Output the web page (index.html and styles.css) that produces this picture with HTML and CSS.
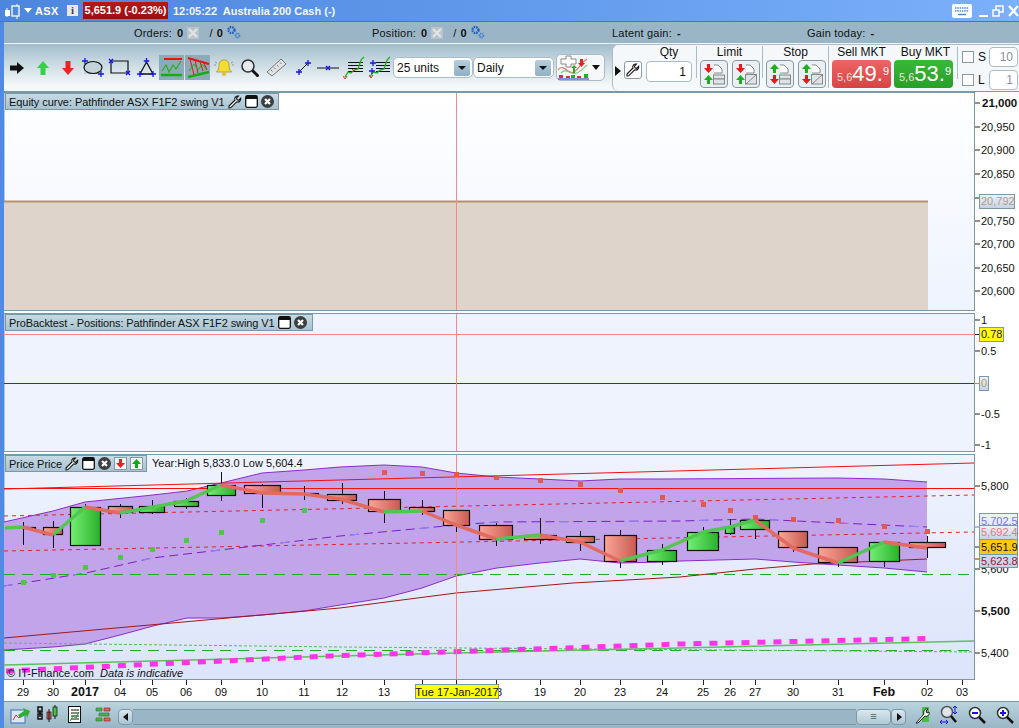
FILE: index.html
```html
<!DOCTYPE html>
<html lang="en">
<head>
<meta charset="utf-8">
<title>ASX - Australia 200 Cash</title>
<link rel="stylesheet" href="styles.css">
</head>
<body>
<svg class="defs" width="0" height="0" aria-hidden="true">
  <defs>
    <linearGradient id="cr" x1="0" x2="1" y1="0" y2="0"><stop offset="0" stop-color="#fba597"/><stop offset="1" stop-color="#c85a50"/></linearGradient>
    <linearGradient id="cg" x1="0" x2="1" y1="0" y2="0"><stop offset="0" stop-color="#74ee74"/><stop offset="1" stop-color="#2bb02b"/></linearGradient>
    <linearGradient id="bg1" x1="0" x2="0" y1="0" y2="1"><stop offset="0" stop-color="#ffffff"/><stop offset="1" stop-color="#eef3fe"/></linearGradient>
    <linearGradient id="bg3" x1="0" x2="0" y1="0" y2="1"><stop offset="0" stop-color="#eff3fe"/><stop offset="1" stop-color="#dce4fb"/></linearGradient>
    <linearGradient id="box" x1="0" x2="0" y1="0" y2="1"><stop offset="0" stop-color="#eef2f7"/><stop offset="1" stop-color="#c3d2e6"/></linearGradient>
    <symbol id="gears" viewBox="0 0 15 14"><circle cx="5.5" cy="5" r="3" fill="none" stroke="#1f5fc0" stroke-width="2.4" stroke-dasharray="1.6 .8"/><circle cx="11.5" cy="10.5" r="2" fill="none" stroke="#3f7fd0" stroke-width="1.8" stroke-dasharray="1.2 .6"/></symbol>
    <symbol id="xbox" viewBox="0 0 12 12"><rect width="12" height="12" fill="#b9c3c8"/><path d="M2 2l8 8M10 2l-8 8" stroke="#dfe4e6" stroke-width="2.4"/></symbol>
    <symbol id="wrench" viewBox="0 0 14 14"><path d="M1 13l0-2 6-6c-.8-2 .6-4.300 3.500-4l-2 2.200.5 1.600 1.700.5 2-2c.4 3-2 4.500-4 3.500l-6 6z" fill="#fff" stroke="#111" stroke-width="1.100"/></symbol>
    <symbol id="win" viewBox="0 0 13 13"><rect x=".7" y=".7" width="11.600" height="11.600" rx="1.500" fill="#fff" stroke="#111" stroke-width="1.300"/><rect x="1" y="1" width="11" height="3" fill="#111"/></symbol>
    <symbol id="close" viewBox="0 0 13 13"><circle cx="6.500" cy="6.500" r="6.500" fill="#3c3f42"/><path d="M4 4l5 5M9 4l-5 5" stroke="#fff" stroke-width="2.200"/></symbol>
    <symbol id="plus" viewBox="0 0 6 6"><path d="M3 0v6M0 3h6" stroke="#1414ee" stroke-width="1.300"/></symbol>
  </defs>
</svg>
<div class="window">
  <header class="titlebar">
    <svg class="ico-candle" width="17" height="18" viewBox="0 0 17 18"><path d="M3 6v9M13 2v15" stroke="#fff"/><rect x="1" y="8" width="5" height="6" fill="#fff"/><rect x="8" y="4" width="7" height="10" fill="#4f88dd" stroke="#fff" stroke-width="1.300"/></svg>
    <svg class="ico-drop" width="8" height="5" viewBox="0 0 8 5"><path d="M0 0h8L4 5z" fill="#fff"/></svg>
    <span class="t-sym">ASX</span>
    <span class="t-info">i</span>
    <span class="t-price">5,651.9 (-0.23%)</span>
    <span class="t-name">12:05:22&nbsp; Australia 200 Cash (-)</span>
    <span class="t-spacer"></span>
    <svg class="ico-kbd" width="20" height="14" viewBox="0 0 20 14"><rect width="20" height="14" rx="2" fill="#fff"/><path d="M3 4h14M3 7h14" stroke="#4f88dd" stroke-width="1.500" stroke-dasharray="1.500 .8"/><path d="M6 10.500h8" stroke="#4f88dd" stroke-width="1.500"/></svg>
    <svg class="ico-wc" width="41" height="14" viewBox="0 0 41 14"><path d="M1 12h9" stroke="#fff" stroke-width="2"/><path d="M15 6h6v6h-6zM18 6V2h7v6h-4" fill="none" stroke="#fff" stroke-width="1.500"/><path d="M31 2l9 10M40 2l-9 10" stroke="#fff" stroke-width="2.200"/></svg>
  </header>

  <div class="infobar">
    <div class="info-group g1"><span>Orders:</span><b>0</b><svg class="ix" width="12" height="12"><use href="#xbox"/></svg><span class="sl">/</span><b>0</b><svg class="gr" width="15" height="14"><use href="#gears"/></svg></div>
    <div class="info-group g2"><span>Position:</span><b>0</b><svg class="ix" width="12" height="12"><use href="#xbox"/></svg><span class="sl">/</span><b>0</b><svg class="gr" width="15" height="14"><use href="#gears"/></svg></div>
    <div class="info-group g3"><span>Latent gain:</span><b>-</b></div>
    <div class="info-group g4"><span>Gain today:</span><b>-</b></div>
  </div>

  <div class="toolbar">
    <div class="tools">
      <svg class="tool t1" width="14" height="12" viewBox="0 0 14 12"><path d="M0 3.500h7V0l7 6-7 6V8.500H0z" fill="#111"/></svg>
      <svg class="tool t2" width="12" height="14" viewBox="0 0 12 14"><path d="M6 0l6 7H8.500v7h-5V7H0z" fill="#35d04a"/></svg>
      <svg class="tool t3" width="12" height="14" viewBox="0 0 12 14"><path d="M3.500 0h5v7H12l-6 7-6-7h3.500z" fill="#f02222"/></svg>
      <svg class="tool t4" width="23" height="20" viewBox="0 0 23 20"><rect x="2" y="3" width="17" height="13" fill="#c4d2da"/><ellipse cx="11" cy="9.500" rx="9" ry="6" fill="none" stroke="#111" stroke-width="1.200"/><use href="#plus" x="0" y="0" width="6" height="6"/><use href="#plus" x="16" y="13" width="6" height="6"/></svg>
      <svg class="tool t5" width="23" height="20" viewBox="0 0 23 20"><path d="M3 3h17v12H3z" fill="none" stroke="#111" stroke-width="1.200"/><path d="M1 1l4 4M5 1L1 5M18 13l4 4M22 13l-4 4" stroke="#1414ee" stroke-width="1.300"/></svg>
      <svg class="tool t6" width="19" height="20" viewBox="0 0 19 20"><path d="M9.500 4L3 16h13z" fill="none" stroke="#111" stroke-width="1.300"/><use href="#plus" x="6.500" y="0" width="6" height="6"/><use href="#plus" x="0" y="13" width="6" height="6"/><use href="#plus" x="13" y="13" width="6" height="6"/></svg>
      <span class="tool-on on1"><svg width="23" height="21" viewBox="0 0 23 21"><path d="M4 2h18" stroke="#f01010" stroke-width="2"/><path d="M1 18h21" stroke="#10b010" stroke-width="2.500"/><path d="M2 14l4-6 3 7 4-7 3 4 5-8" fill="none" stroke="#1bb41b" stroke-width="1.200"/></svg></span>
      <span class="tool-on on2"><svg width="24" height="23" viewBox="0 0 24 23"><path d="M2 2l21 6" stroke="#f01010" stroke-width="2"/><path d="M2 21l21-5" stroke="#10b010" stroke-width="2.500"/><path d="M4 3l4 16M9 4l3 13M14 6l3 9M18 7l3 7" stroke="#f01010" stroke-width="1"/><path d="M3 15l5-7 4 6 4-6 4 5" fill="none" stroke="#1bb41b" stroke-width="1"/></svg></span>
      <svg class="tool t7" width="20" height="18" viewBox="0 0 20 18"><path d="M10 1c4 0 5 3 5 6 0 3 1 4 2.500 6h-15C4 11 5 10 5 7c0-3 1-6 5-6z" fill="#f5dc32" stroke="#a08a10" stroke-width=".7"/><circle cx="10" cy="15" r="2" fill="#e0c020"/><path d="M1 3l2 1M0 6l2 0M19 3l-2 1M20 6l-2 0" stroke="#999"/></svg>
      <svg class="tool t8" width="18" height="18" viewBox="0 0 18 18"><circle cx="7" cy="7" r="6" fill="#e6eaec" stroke="#333" stroke-width="1.600"/><path d="M11.500 11.500l6 6" stroke="#111" stroke-width="3"/></svg>
      <svg class="tool t9" width="21" height="19" viewBox="0 0 21 19"><path d="M1 14L15 1l5 5L6 18z" fill="#dfe3e4" stroke="#777"/><path d="M5 12l1.500 1.500M8 9.500l1.500 1.500M11 7l1.500 1.500M14 4.500l1.500 1.500" stroke="#777"/></svg>
      <svg class="tool t10" width="15" height="15" viewBox="0 0 15 15"><path d="M3 12L12 3" stroke="#111"/><use href="#plus" x="0" y="9" width="6" height="6"/><use href="#plus" x="9" y="0" width="6" height="6"/></svg>
      <svg class="tool t11" width="22" height="6" viewBox="0 0 22 6"><path d="M0 3h22" stroke="#111"/><path d="M9 1l4 4M13 1L9 5" stroke="#1414ee" stroke-width="1.300"/></svg>
      <svg class="tool t12" width="22" height="23" viewBox="0 0 22 23"><path d="M5 6.500h15M5 9.500h15M5 12.500h15M5 15.500h15" stroke="#111" stroke-width="1.100"/><path d="M2 21l3-5 3 1 3-3 4-1 3-9 3-3" fill="none" stroke="#1cb01c" stroke-width="1.300"/><path d="M0 20l2 3 2-3" fill="none" stroke="#e83030"/><path d="M9 13l2 2 2-2" fill="none" stroke="#e83030"/></svg>
      <svg class="tool t13" width="22" height="23" viewBox="0 0 22 23"><path d="M7 6.500h14M7 9.500h14M7 12.500h14M7 15.500h14" stroke="#111" stroke-width="1.100"/><path d="M1 21l3-5 4 1 3-3 4-1 3-9 3-3" fill="none" stroke="#1cb01c" stroke-width="1.300"/><path d="M0 19l2 3 2-3" fill="none" stroke="#e83030"/><use href="#plus" x="1" y="4" width="6" height="6"/><use href="#plus" x="0" y="12" width="6" height="6"/></svg>
      <div class="select s-units"><span>25 units</span><i class="sel-btn"></i></div>
      <div class="select s-daily"><span>Daily</span><i class="sel-btn"></i></div>
      <div class="indbtn">
        <svg width="33" height="25" viewBox="0 0 33 25"><path d="M4 4h5V1h5v3h5v5h-5v3H9V9H4z" fill="#fff" stroke="#888"/><path d="M1 15c6-8 10 6 16 2s8-10 13-13" fill="none" stroke="#e07070" stroke-width="1.200"/><path d="M4 18c6-6 10 3 16 0s7-6 10-8" fill="none" stroke="#7ccc7c" stroke-width="1.200"/><path d="M14 13l3-3 3 3h-2v5h-2v-5z" fill="#20b020"/><path d="M23 4h3v4h2l-3.500 4L21 8h2z" fill="#e82020"/><path d="M2 20h4v3H2zM9 21h4v2H9zM20 21h4v2h-4z" fill="#e03030"/><path d="M14 20h4v3h-4zM27 19h4v4h-4z" fill="#20b020"/><path d="M1 24h31" stroke="#2222cc"/></svg>
        <span class="ind-arrow"></span>
      </div>
    </div>
    <div class="order">
      <span class="notch"></span>
      <span class="btn-wrench"><svg width="14" height="14"><use href="#wrench"/></svg></span>
      <div class="ocol qty"><label>Qty</label><div class="qty-input">1</div></div>
      <div class="ocol lim"><label>Limit</label>
        <div class="obtns">
          <span class="obtn"><svg width="22" height="22" viewBox="0 0 22 22"><path d="M6 1v4h3l-4.500 5L0 5h3V1z" transform="translate(1 0)" fill="#e81818"/><path d="M4.500 12L9 17H6v4H3v-4H0z" transform="translate(1 0)" fill="#1cb01c"/><path d="M11 2h4l4 4v4h-8" fill="#fff" stroke="#888"/><rect x="10.500" y="12" width="11" height="4" fill="#dde3e6" stroke="#888"/><rect x="10.500" y="16" width="11" height="5" fill="#dde3e6" stroke="#888"/></svg></span>
          <span class="obtn"><svg width="22" height="22" viewBox="0 0 22 22"><path d="M6 1v4h3l-4.500 5L0 5h3V1z" transform="translate(1 0)" fill="#e81818"/><path d="M4.500 12L9 17H6v4H3v-4H0z" transform="translate(1 0)" fill="#1cb01c"/><path d="M11 2h4l4 4v4h-8" fill="#fff" stroke="#888"/><rect x="10.500" y="11.500" width="11" height="9.500" fill="#dde3e6" stroke="#888"/><path d="M11 21l10-9" stroke="#888"/></svg></span>
        </div></div>
      <div class="ocol lim"><label>Stop</label>
        <div class="obtns">
          <span class="obtn"><svg width="22" height="22" viewBox="0 0 22 22"><path d="M4.500 1L9 6H6v4H3V6H0z" transform="translate(1 0)" fill="#1cb01c"/><path d="M6 12v4h3l-4.500 5L0 16h3v-4z" transform="translate(1 0)" fill="#e81818"/><path d="M11 2h4l4 4v4h-8" fill="#fff" stroke="#888"/><rect x="10.500" y="12" width="11" height="4" fill="#dde3e6" stroke="#888"/><rect x="10.500" y="16" width="11" height="5" fill="#dde3e6" stroke="#888"/></svg></span>
          <span class="obtn"><svg width="22" height="22" viewBox="0 0 22 22"><path d="M4.500 1L9 6H6v4H3V6H0z" transform="translate(1 0)" fill="#1cb01c"/><path d="M6 12v4h3l-4.500 5L0 16h3v-4z" transform="translate(1 0)" fill="#e81818"/><path d="M11 2h4l4 4v4h-8" fill="#fff" stroke="#888"/><rect x="10.500" y="11.500" width="11" height="9.500" fill="#dde3e6" stroke="#888"/><path d="M11 21l10-9" stroke="#888"/></svg></span>
        </div></div>
      <div class="ocol mkt"><label>Sell MKT</label><div class="price sell"><small>5,6</small><strong>49.</strong><sup>9</sup></div></div>
      <div class="ocol mkt nosep"><label>Buy MKT</label><div class="price buy"><small>5,6</small><strong>53.</strong><sup>9</sup></div></div>
      <div class="sl-col">
        <div class="sl-row"><span class="chk"></span><span class="sl-l">S</span><span class="sl-in">10</span></div>
        <div class="sl-row"><span class="chk"></span><span class="sl-l">L</span><span class="sl-in">1</span></div>
      </div>
    </div>
  </div>

  <section class="panel p1">
    <svg class="chart" width="1015" height="220" viewBox="4 92 1015 220">
      <rect x="4" y="92.500" width="970.500" height="218" fill="url(#bg1)" stroke="#7b98a6"/>
      <rect x="4" y="201" width="924" height="109" fill="#dfd4cb"/>
      <path d="M4 201.500h924" fill="none" stroke="#b3926f" stroke-width="2"/>
      <path d="M456.500 93v217" fill="none" stroke="#f28a8a"/>
      <g class="ticks"><path d="M975 103h5M975 127h5M975 150h5M975 174h5M975 198h5M975 221h5M975 244h5M975 268h5M975 291h5"/></g>
      <g class="ax"><text class="b" x="982" y="107">21,000</text><text x="981" y="131">20,950</text><text x="981" y="154">20,900</text><text x="981" y="178">20,850</text><text x="981" y="225">20,750</text><text x="981" y="248">20,700</text><text x="981" y="272">20,650</text><text x="981" y="295">20,600</text></g>
      <rect x="979.500" y="194.500" width="35" height="14" fill="url(#box)" stroke="#7b98a6"/>
      <text class="axs" x="981" y="205" fill="#b59a84">20,792</text>
    </svg>
    <div class="plabel pl1"><span>Equity curve: Pathfinder ASX F1F2 swing V1</span><svg width="14" height="14"><use href="#wrench"/></svg><svg width="13" height="13"><use href="#win"/></svg><svg width="13" height="13"><use href="#close"/></svg></div>
  </section>

  <section class="panel p2">
    <svg class="chart" width="1015" height="141" viewBox="4 312 1015 141">
      <rect x="4" y="313.500" width="970.500" height="138" fill="#eff3fe" stroke="#7b98a6"/>
      <path d="M4 334.500h970" fill="none" stroke="#f28a8a"/>
      <path d="M4 383.500h970" fill="none" stroke="#2a2ad4"/>
      <path d="M456.500 314v137" fill="none" stroke="#f28a8a"/>
      <g class="ticks"><path d="M975 320h5M975 351h5M975 414h5M975 445h5"/><path d="M975 334.500h5"/></g>
      <path d="M975 383.500h5" fill="none" stroke="#b58a4a"/>
      <g class="ax"><text x="981" y="324">1</text><text x="981" y="355">0.5</text><text x="981" y="418">-0.5</text><text x="981" y="449">-1</text></g>
      <rect x="979.500" y="327.500" width="24" height="14" fill="#ffff00" stroke="#7b98a6"/>
      <text class="axs" x="981" y="338" fill="#222">0.78</text>
      <rect x="979.500" y="376.500" width="9" height="14" fill="url(#box)" stroke="#7b98a6"/>
      <text class="axs" x="981" y="387" fill="#b59a60">0</text>
    </svg>
    <div class="plabel pl2"><span>ProBacktest - Positions: Pathfinder ASX F1F2 swing V1</span><svg width="13" height="13"><use href="#win"/></svg><svg width="13" height="13"><use href="#close"/></svg></div>
  </section>

  <section class="panel p3">
    <svg class="chart" width="1015" height="248" viewBox="4 453 1015 248">
      <rect x="4" y="454.500" width="970.500" height="225" fill="url(#bg3)" stroke="#7b98a6"/>
      <path d="M4 522 53 511 85 502 153 495 187 491 221 483 262 473 304 470 340 467 384 465 422 467 456 473 497 477 540 479 580 481 620 479 662 479 837 478 884 479 927 482V572L884 568 838 565 793 562 755 559 680 561 662 562 620 563 580 559 540 563 497 568 456 576 422 588 384 598 340 605 304 611 262 615 221 618 187 618 153 626 120 635 85 644 53 647 4 650Z" fill="#c2a4ea"/>
      <path d="M4 522 53 511 85 502 153 495 187 491 221 483 262 473 304 470 340 467 384 465 422 467 456 473 497 477 540 479 580 481 620 479 662 479 837 478 884 479 927 482" fill="none" stroke="#8a2cc8"/>
      <path d="M4 650 53 647 85 644 120 635 153 626 187 618 221 618 262 615 304 611 340 605 384 598 422 588 456 576 497 568 540 563 580 559 620 563 662 562 680 561 755 559 793 562 838 565 884 568 927 572" fill="none" stroke="#8a2cc8"/>
      <path d="M4 488.500h970" fill="none" stroke="#f21010"/>
      <path d="M4 489 974 463" stroke="#f21010" fill="none"/>
      <path d="M4 516 974 495" stroke="#f02020" stroke-dasharray="4 4" fill="none"/>
      <path d="M4 551 974 532" stroke="#f02020" stroke-dasharray="4 4" fill="none"/>
      <path d="M4 586 86 573 152 558 340 536 456 525 497 522 680 521 755 519 838 523 927 527" fill="none" stroke="#7a1fc0" stroke-dasharray="9 5"/>
      <path d="M4 586 86 573 152 558 340 536 456 525 497 522 680 521 755 519 838 523 927 527" fill="none" stroke="#8c8cff" stroke-dasharray="9 61"/>
      <path d="M4 574.500h970" fill="none" stroke="#22aa22" stroke-dasharray="11 7"/>
      <path d="M4 650.500h970" fill="none" stroke="#22aa22" stroke-dasharray="11 7"/>
      <path d="M4 643 340 647 974 652" fill="none" stroke="#5db95d" stroke-dasharray="3 2"/>
      <path d="M4 638 340 608 456 593 573 583 680 577 755 569 813 564 927 559" fill="none" stroke="#a01818"/>
      <path d="M4 665 340 656 456 653 680 648 974 641" fill="none" stroke="#5cc05c" stroke-width="1.500"/>
      <path d="M6 671 330 656 680 644 930 638.500" fill="none" stroke="#ff33e8" stroke-width="5" stroke-dasharray="8 8"/>
      <path d="M456.500 455v224" fill="none" stroke="#f28a8a"/>
      <path class="wick" d="M23.500 522v23M53.500 521v27M85.500 504v4M120.500 504v14M152.500 500v14M186.500 498v11M221.500 472v29M262.500 484v24M304.500 486v14M342.500 483v21M384.500 491v32M422.500 500v15M456.500 510v22M496.500 523v23M540.500 518v26M580.500 531v20M620.500 530v38M662.500 544v21M703.500 527v6M730.500 519v16M755.500 515v24M793.500 548v4M838.500 563v4M884.500 561v6M927.500 536v22"/>
      <g class="cand r">
        <rect x="23.500" y="527.500" width="12" height="1"/><rect x="43.500" y="527.500" width="19" height="7"/><rect x="108.500" y="506.500" width="24" height="6"/><rect x="244.500" y="485.500" width="36" height="8"/><rect x="304.500" y="493.500" width="14" height="1"/><rect x="327.500" y="494.500" width="29" height="6"/><rect x="368.500" y="499.500" width="32" height="12"/><rect x="409.500" y="507.500" width="25" height="4"/><rect x="443.500" y="510.500" width="26" height="15"/><rect x="479.500" y="525.500" width="33" height="14"/><rect x="524.500" y="535.500" width="32" height="4"/><rect x="566.500" y="536.500" width="28" height="6"/><rect x="604.500" y="535.500" width="32" height="26"/><rect x="778.500" y="531.500" width="29" height="16"/><rect x="818.500" y="547.500" width="39" height="15"/><rect x="909.500" y="542.500" width="36" height="5"/>
      </g>
      <g class="cand g">
        <rect x="70.500" y="507.500" width="30" height="38"/><rect x="139.500" y="506.500" width="25" height="6"/><rect x="174.500" y="501.500" width="24" height="5"/><rect x="207.500" y="485.500" width="28" height="10"/><rect x="647.500" y="550.500" width="29" height="11"/><rect x="687.500" y="532.500" width="31" height="18"/><rect x="725.500" y="527.500" width="9" height="6"/><rect x="740.500" y="520.500" width="29" height="9"/><rect x="869.500" y="542.500" width="30" height="19"/>
      </g>
      <g class="trend">
        <path class="tg" d="M5 528 23 527M53 535 85 507M120 513 186 501 221 485M384 512 422 511M496 539 540 535M620 561 662 550 703 532 730 527 755 520M838 563 884 542"/>
        <path class="tr" d="M23 527 53 535M85 507 120 513M221 485 262 493 304 494 340 499 384 512M422 511 456 525 496 539M540 535 580 542 620 561M755 520 793 548 838 563M884 542 927 548"/>
      </g>
      <g class="dots-g"><rect x="21" y="580" width="5" height="5"/><rect x="51" y="573" width="5" height="5"/><rect x="83" y="565" width="5" height="5"/><rect x="118" y="555" width="5" height="5"/><rect x="150" y="547" width="5" height="5"/><rect x="184" y="538" width="5" height="5"/><rect x="219" y="530" width="5" height="5"/><rect x="260" y="518" width="5" height="5"/><rect x="302" y="508" width="5" height="5"/></g>
      <g class="dots-r"><rect x="382" y="470" width="5" height="5"/><rect x="420" y="471" width="5" height="5"/><rect x="454" y="472" width="5" height="5"/><rect x="494" y="475" width="5" height="5"/><rect x="538" y="478" width="5" height="5"/><rect x="578" y="482" width="5" height="5"/><rect x="618" y="488" width="5" height="5"/><rect x="660" y="495" width="5" height="5"/><rect x="701" y="502" width="5" height="5"/><rect x="728" y="508" width="5" height="5"/><rect x="753" y="515" width="5" height="5"/><rect x="791" y="517" width="5" height="5"/><rect x="836" y="518" width="5" height="5"/><rect x="882" y="524" width="5" height="5"/><rect x="925" y="529" width="5" height="5"/></g>
      <g class="ticks"><path d="M975 486h5M975 569h5M975 611h5M975 653h5M975 547h5"/></g>
      <path d="M975 527h5" fill="none" stroke="#6a6af0"/><path d="M975 559h5" fill="none" stroke="#a01020"/>
      <g class="ax"><text x="981" y="490">5,800</text><text x="981" y="573">5,600</text><text class="b" x="981" y="615">5,500</text><text x="981" y="657">5,400</text></g>
      <rect x="979.500" y="513.500" width="38" height="54" fill="url(#box)" stroke="#7b98a6"/>
      <text class="axs" x="981" y="525" fill="#7676f6">5,702.5</text>
      <rect x="979.500" y="525.500" width="38" height="14" fill="url(#box)" stroke="#7b98a6"/>
      <text class="axs" x="981" y="536" fill="#e87878">5,692.4</text>
      <rect x="979.500" y="539.500" width="38" height="15" fill="#ffc80a" stroke="#7b98a6"/>
      <text class="axs" x="981" y="551" fill="#111">5,651.9</text>
      <text class="axs" x="981" y="565" fill="#a01428">5,623.8</text>
      <g class="dt"><path class="ticks-d" d="M23.500 680v5M53.500 680v5M85.500 680v5M120.500 680v5M152.500 680v5M186.500 680v5M221.500 680v5M262.500 680v5M304.500 680v5M342.500 680v5M384.500 680v5M422.500 680v5M456.500 680v5M496.500 680v5M540.500 680v5M580.500 680v5M620.500 680v5M662.500 680v5M703.500 680v5M730.500 680v5M755.500 680v5M793.500 680v5M838.500 680v5M884.500 680v5M927.500 680v5M962.500 680v5"/>
        <text x="23" y="696">29</text><text x="53" y="696">30</text><text class="b" x="85" y="696">2017</text><text x="120" y="696">04</text><text x="152" y="696">05</text><text x="186" y="696">06</text><text x="221" y="696">09</text><text x="262" y="696">10</text><text x="304" y="696">11</text><text x="342" y="696">12</text><text x="384" y="696">13</text><text x="496" y="696">18</text><text x="540" y="696">19</text><text x="580" y="696">20</text><text x="620" y="696">23</text><text x="662" y="696">24</text><text x="703" y="696">25</text><text x="730" y="696">26</text><text x="755" y="696">27</text><text x="793" y="696">30</text><text x="838" y="696">31</text><text class="b" x="884" y="696">Feb</text><text x="927" y="696">02</text><text x="962" y="696">03</text></g>
      <rect x="415.500" y="684.500" width="83" height="14" fill="#ffff00" stroke="#7b98a6"/>
      <text class="dtbox" x="457" y="696">Tue 17-Jan-2017</text>
    </svg>
    <div class="plabel pl3"><span>Price Price</span><svg width="14" height="14"><use href="#wrench"/></svg><svg width="13" height="13"><use href="#win"/></svg><svg width="13" height="13"><use href="#close"/></svg><span class="mini"><svg width="9" height="9" viewBox="0 0 9 9"><path d="M3 0h3v4h3L4.500 9 0 4h3z" fill="#e82020"/></svg></span><span class="mini"><svg width="9" height="9" viewBox="0 0 9 9"><path d="M4.500 0L9 5H6v4H3V5H0z" fill="#10a810"/></svg></span></div>
    <div class="yearinfo">Year:High 5,833.0 Low 5,604.4</div>
    <div class="copy">© IT-Finance.com&nbsp; <em>Data is indicative</em></div>
  </section>

  <footer class="bottombar">
    <div class="b-left">
      <svg width="20" height="20" viewBox="0 0 20 20"><rect x="1" y="5" width="14" height="13" fill="#d8e6f6" stroke="#3a70c0"/><path d="M3 15l3-5 3 3 3-4" fill="none" stroke="#e03030"/><path d="M8 10l6-4-1-3 7 3-3 7-1-3-6 3z" fill="#30b030"/></svg>
      <svg class="gap-a" width="24" height="20" viewBox="0 0 24 20"><path d="M3 2h4v5H3zM3 9h4v5H3z" fill="none" stroke="#111" stroke-width="1.500"/><path d="M5 5v7" stroke="#111" stroke-width="1.500"/><rect x="12" y="7" width="4" height="7" fill="#e86060" stroke="#111" stroke-width=".7"/><path d="M14 4v13M20 0v14" stroke="#111"/><rect x="18" y="2" width="4" height="9" fill="#40c040" stroke="#111" stroke-width=".7"/></svg>
      <svg class="gap-b" width="14" height="18" viewBox="0 0 14 18"><rect x=".5" y=".5" width="12" height="16" fill="#fff" stroke="#111"/><path d="M3 4h8M3 7h8M3 10h8M3 13h8" stroke="#111"/><path d="M2 15l3-5 3 2 3-6" fill="none" stroke="#20a020"/></svg>
      <svg class="gap-c" width="16" height="18" viewBox="0 0 16 18"><path d="M1 2h6v3H1zM4 7h10v3H4zM1 12h6v3H1z" fill="#50b050" stroke="#2a702a" stroke-width=".6"/><path d="M9 2h6v3H9zM9 12h6v3H9z" fill="#e06060" stroke="#902020" stroke-width=".6"/></svg>
    </div>
    <div class="scroll">
      <span class="sb-btn"><i class="tri-l"></i></span>
      <span class="sb-track"></span>
      <span class="sb-thumb">≡</span>
      <span class="sb-btn"><i class="tri-r"></i></span>
    </div>
    <div class="b-right">
      <svg width="16" height="18" viewBox="0 0 16 18"><rect x="8" y="1" width="7" height="15" fill="#45c045"/><path d="M2 17l8-9c-1-3 1-6 4-5l-2 2 1 2 2-1c1 3-2 5-4 4l-7 7z" fill="#fff" stroke="#222"/></svg>
      <svg width="18" height="20" viewBox="0 0 18 20"><circle cx="7" cy="7" r="5.500" fill="#dfe5e8" stroke="#555" stroke-width="1.500"/><path d="M11 11l5 6" stroke="#111" stroke-width="2.500"/><path d="M15 1v8M13 3l2-2 2 2M13 7l2 2 2-2M0 17h8M2 15l-2 2 2 2M6 15l2 2-2 2" fill="none" stroke="#1414ee"/></svg>
      <svg width="18" height="18" viewBox="0 0 18 18"><circle cx="7" cy="7" r="5.500" fill="#fff" stroke="#333" stroke-width="1.500"/><path d="M4 7h6" stroke="#1414ee" stroke-width="2"/><path d="M11 11l6 6" stroke="#111" stroke-width="2.500"/></svg>
      <svg width="18" height="18" viewBox="0 0 18 18"><circle cx="7" cy="7" r="5.500" fill="#fff" stroke="#333" stroke-width="1.500"/><path d="M4 7h6M7 4v6" stroke="#1414ee" stroke-width="2"/><path d="M11 11l6 6" stroke="#111" stroke-width="2.500"/></svg>
    </div>
  </footer>
</div>
</body>
</html>
```

FILE: styles.css
```css
* { box-sizing: border-box; }
html, body { margin: 0; padding: 0; }
body { width: 1019px; height: 728px; overflow: hidden; background: #fff; font-family: "Liberation Sans", Arial, sans-serif; font-size: 11px; color: #111; }
svg { flex-shrink: 0; }
.defs { position: absolute; }
.window { width: 1019px; height: 728px; display: flex; flex-direction: column; border-left: 4px solid #4f8ae6; background: #fff; }

.titlebar { flex: 0 0 22px; margin-left: -4px; display: flex; align-items: center; padding-left: 4px; color: #fff; font-weight: bold; font-size: 11px; background: linear-gradient(90deg, #4c86de 0%, #5f98ea 45%, #7bb0fb 100%); border-bottom: 1px solid #3f77c8; }
.ico-drop { margin-left: 3px; }
.t-sym { margin-left: 3px; width: 32px; letter-spacing: .4px; }
.t-info { width: 11px; height: 11px; background: #e8e8e8; color: #445; font-family: "Liberation Serif", serif; font-size: 11px; line-height: 11px; text-align: center; }
.t-price { margin-left: 5px; width: 85px; height: 17px; line-height: 17px; background: linear-gradient(180deg, #b81818, #981010); text-align: center; white-space: nowrap; }
.t-name { margin-left: 5px; color: #f2f6fc; white-space: nowrap; }
.t-spacer { flex: 1; }
.ico-kbd { margin-right: 6px; }

.infobar { flex: 0 0 22px; display: flex; align-items: center; padding-top: 1px; background: #9ab6c6; border-bottom: 1px solid #eef3f6; font-size: 11px; letter-spacing: .2px; color: #111; padding-left: 130px; }
.info-group { display: flex; align-items: center; white-space: nowrap; }
.info-group b { font-weight: bold; margin-left: 5px; }
.g1 { width: 238px; }
.g2 { width: 240px; }
.g3 { width: 195px; }
.ix { margin-left: 4px; }
.sl { margin-left: 10px; margin-right: -1px; }
.gr { margin-left: 3px; margin-top: -3px; }

.toolbar { flex: 0 0 48px; display: flex; background: linear-gradient(180deg, #a2bccb 0%, #c4d6df 35%, #f6f9fa 90%); border-bottom: 1px solid #7b98a6; }
.tools { width: 608px; display: flex; align-items: center; padding-left: 6px; position: relative; }
.t1 { margin-right: 13px; }
.t2 { margin-right: 13px; }
.t3 { margin-right: 8px; }
.t4 { margin-right: 3px; }
.t5 { margin-right: 6px; }
.t6 { margin-right: 3px; }
.tool-on { width: 25px; height: 25px; background: #8ea9b8; display: flex; align-items: center; justify-content: center; margin-right: 1px; }
.on2 { margin-right: 4px; }
.t7 { margin-right: 7px; }
.t8 { margin-right: 7px; }
.t9 { margin-right: 9px; }
.t10 { margin-right: 6px; }
.t11 { margin-right: 4px; }
.t12 { margin-right: 4px; }
.t13 { margin-right: 2px; }
.select { height: 21px; display: flex; align-items: center; justify-content: space-between; background: #fff; border: 1px solid #a9bcc7; border-radius: 5px; padding: 0 2px 0 3px; font-size: 12px; }
.s-units { width: 80px; }
.s-daily { width: 81px; }
.sel-btn { width: 16px; height: 16px; background: linear-gradient(180deg, #b7cfdd, #8fb0c4); border-radius: 2px; position: relative; }
.sel-btn::after { content: ""; position: absolute; left: 4px; top: 6px; border: 4px solid transparent; border-top: 4px solid #111; }
.indbtn { width: 49px; height: 27px; margin-left: 2px; display: flex; align-items: center; background: #f5f7f8; border: 1px solid #a9bcc7; border-radius: 5px; }
.ind-arrow { margin-left: 2px; border: 4px solid transparent; border-top: 5px solid #111; margin-top: 4px; }

.order { flex: 1; display: flex; align-items: flex-start; padding-top: 1px; background: #f5f8fa; position: relative; padding-left: 11px; border-left: 1px solid #a9bcc7; border-top: 1px solid #a9bcc7; border-radius: 6px 0 0 6px; font-size: 12px; }
.notch { position: absolute; left: 2px; top: 21px; border: 5px solid transparent; border-left: 6px solid #111; }
.btn-wrench { width: 18px; height: 18px; margin-top: 15px; display: flex; align-items: center; justify-content: center; border: 1px solid #8a9aa5; border-radius: 3px; background: #fff; }
.ocol { display: flex; flex-direction: column; align-items: center; }
.ocol label { height: 13px; line-height: 13px; margin-bottom: 1px; }
.qty { width: 46px; margin-left: 4px; margin-right: 4px; }
.qty-input { width: 46px; height: 21px; margin-top: 1px; background: #fff; border: 1px solid #a9bcc7; border-radius: 4px; text-align: right; padding-right: 5px; line-height: 20px; }
.lim { width: 66px; border-left: 1px solid #a9bcc7; height: 32px; }
.obtns { display: flex; gap: 4px; }
.obtn { width: 28px; height: 28px; background: #e9eff2; border: 1px solid #8a9aa5; border-radius: 4px; display: flex; align-items: center; justify-content: center; }
.mkt { width: 66px; border-left: 1px solid #a9bcc7; height: 42px; }
.nosep { border-left: 0; width: 63px; align-items: flex-start; }
.nosep label { align-self: center; }
.price { width: 59px; height: 28px; border-radius: 4px; color: #fff; display: flex; align-items: baseline; white-space: nowrap; padding-left: 5px; line-height: 28px; }
.sell { background: linear-gradient(180deg, #ee6464, #d64444); }
.buy { background: linear-gradient(180deg, #38b838, #27a027); }
.price small { font-size: 11px; color: #f4dcdc; }
.price strong { font-size: 22px; font-weight: normal; }
.price sup { font-size: 11px; line-height: 10px; align-self: flex-start; margin-top: 6px; }
.sl-col { display: flex; flex-direction: column; gap: 3px; border-left: 1px solid #a9bcc7; padding-left: 4px; height: 32px; margin-top: 1px; }
.sl-row { display: flex; align-items: center; height: 20px; flex-shrink: 0; }
.chk { width: 12px; height: 12px; background: #fff; border: 1px solid #8a9aa5; }
.sl-l { width: 15px; padding-left: 4px; }
.sl-in { width: 29px; height: 20px; background: #fff; border: 1px solid #a9bcc7; border-radius: 4px; text-align: right; padding-right: 4px; line-height: 18px; color: #8c8caa; }

.panel { position: relative; display: block; }
.p1 { flex: 0 0 220px; }
.p2 { flex: 0 0 141px; }
.p3 { flex: 0 0 248px; }
.chart { display: block; }
.chart text { font-family: "Liberation Sans", Arial, sans-serif; }
.ticks path, .ticks-d { stroke: #222; fill: none; }
.ax text { font-size: 11px; fill: #111; }
.ax .b { font-weight: bold; font-size: 11.500px; }
.axs { font-size: 11px; }
.wick { stroke: #111; fill: none; }
.cand rect { stroke: #111; stroke-width: 1.200; }
.cand.r rect { fill: url(#cr); }
.cand.g rect { fill: url(#cg); }
.trend path { fill: none; stroke-width: 3.500; stroke-linejoin: round; }
.tg { stroke: #52c652; }
.tr { stroke: #e26a60; }
.dots-g rect { fill: #4cc74c; }
.dots-r rect { fill: #e2594f; }
.dt text { font-size: 11px; fill: #111; text-anchor: middle; }
.dt .b { font-weight: bold; font-size: 12.500px; }
.dtbox { font-size: 11px; fill: #111; text-anchor: middle; }

.plabel { position: absolute; left: 1px; display: flex; align-items: center; gap: 3px; height: 17px; padding: 0 2px 0 3px; background: linear-gradient(180deg, #c6dae4, #a9c3d1); border: 1px solid #7b98a6; font-size: 11px; white-space: nowrap; }
.pl1 { top: 1px; width: 274px; letter-spacing: -.05px; }
.pl2 { top: 2px; width: 308px; letter-spacing: -.1px; }
.pl3 { top: 2px; width: 142px; }
.mini { width: 13px; height: 13px; background: #f2f5f6; border: 1px solid #8a9aa5; display: flex; align-items: center; justify-content: center; }
.yearinfo { position: absolute; left: 148px; top: 4px; font-size: 11px; white-space: nowrap; }
.copy { position: absolute; left: 3px; top: 214px; font-size: 11px; white-space: nowrap; }

.bottombar { flex: 0 0 27px; display: flex; align-items: center; padding-left: 6px; background: linear-gradient(180deg, #b9d4dd, #9ab6c6); border-top: 1px solid #7b98a6; }
.b-left { width: 108px; display: flex; align-items: center; }
.gap-a { margin-left: 5px; }
.gap-b { margin-left: 9px; }
.gap-c { margin-left: 13px; }
.scroll { width: 788px; height: 16px; display: flex; align-items: stretch; margin-top: 3px; }
.sb-btn { width: 15px; display: flex; align-items: center; justify-content: center; background: linear-gradient(180deg, #dbe8ee, #a9c4d2); border: 1px solid #7b98a6; border-radius: 4px; }
.sb-track { flex: 1; background: #9ab6c6; border-top: 1px solid #7b98a6; border-bottom: 1px solid #7b98a6; }
.sb-thumb { width: 35px; background: linear-gradient(180deg, #dbe8ee, #b0c9d6); border: 1px solid #7b98a6; border-radius: 4px; text-align: center; line-height: 13px; color: #4a5a66; }
.tri-l { border: 4px solid transparent; border-right: 5px solid #111; margin-left: -5px; }
.tri-r { border: 4px solid transparent; border-left: 5px solid #111; margin-right: -5px; }
.b-right { flex: 1; display: flex; align-items: center; gap: 10px; padding-left: 8px; }
```
